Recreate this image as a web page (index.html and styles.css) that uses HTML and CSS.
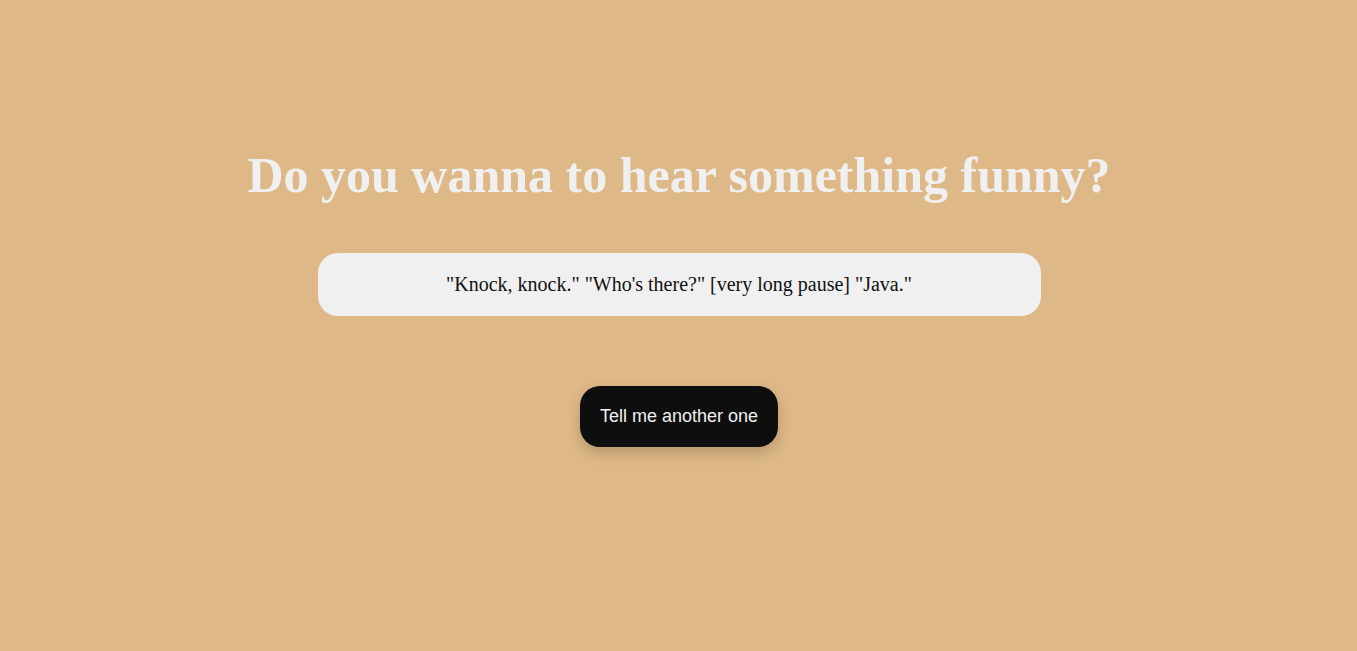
FILE: index.html
```html
<!DOCTYPE html>
<html>
<head>
<meta charset="utf-8">
<link rel="stylesheet" href="styles.css">
</head>
<body>
<main class="container">
  <h1 class="title">Do you wanna to hear something funny?</h1>
  <div class="joke">"Knock, knock." "Who's there?" [very long pause] "Java."</div>
  <button class="btn">Tell me another one</button>
</main>
</body>
</html>
```
FILE: styles.css
```css
html, body {
  margin: 0;
  padding: 0;
}
body {
  background: #deb887;
  font-family: "Liberation Serif", "Times New Roman", serif;
  min-height: 651px;
}
.container {
  display: flex;
  flex-direction: column;
  align-items: center;
  padding-top: 145px;
  padding-left: 1px;
}
.title {
  margin: 0;
  font-size: 50px;
  font-weight: bold;
  color: #f0f0f0;
  line-height: 60px;
}
.joke {
  margin-top: 48px;
  width: 723px;
  height: 63px;
  box-sizing: border-box;
  background: #f0f0f0;
  border-radius: 20px;
  display: flex;
  align-items: center;
  justify-content: center;
  font-size: 20px;
  color: #111;
}
.btn {
  margin-top: 70px;
  width: 198px;
  height: 61px;
  border: none;
  border-radius: 20px;
  background: #0e0e0e;
  color: #f0f0f0;
  font-family: "Liberation Sans", Arial, sans-serif;
  font-size: 18px;
  box-shadow: 0 6px 14px rgba(0,0,0,0.18);
  cursor: pointer;
}
```
